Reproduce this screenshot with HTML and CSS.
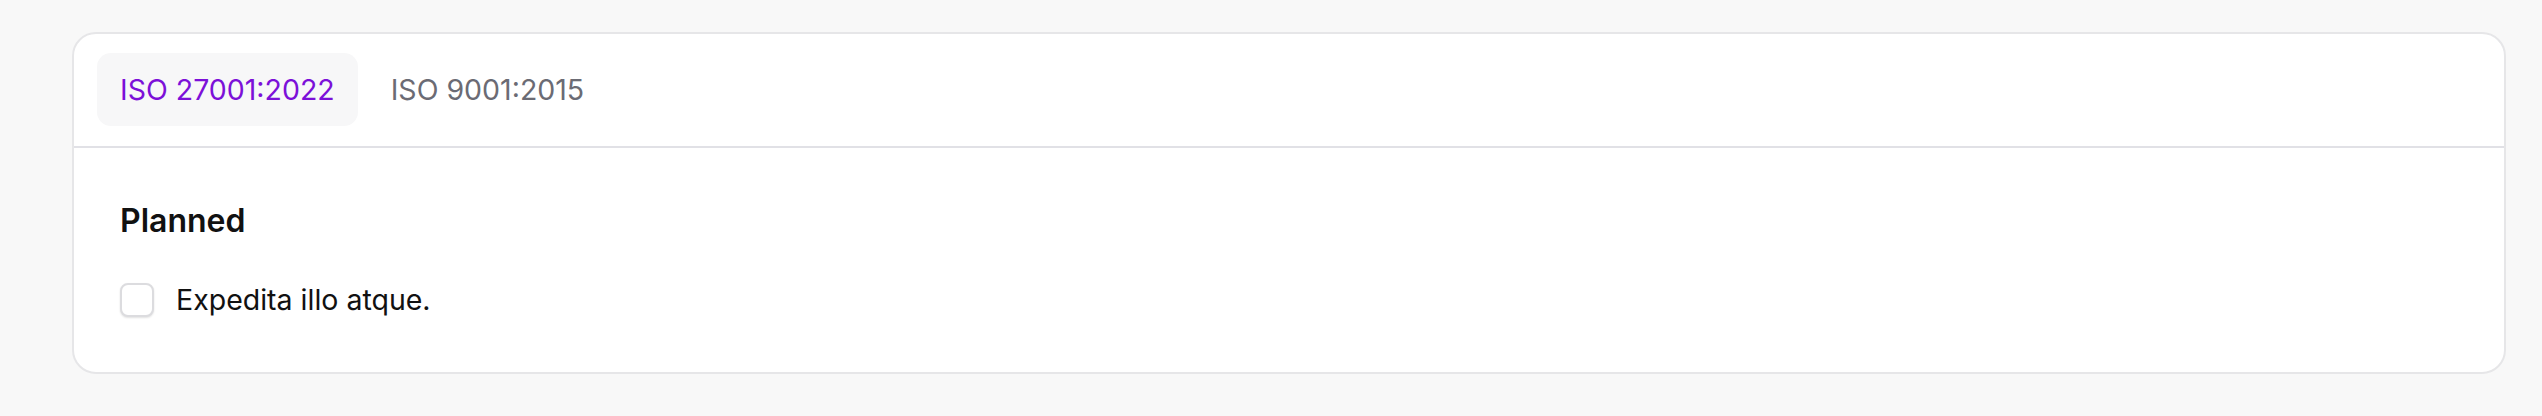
FILE: index.html
```html
<!DOCTYPE html>
<html>
<head>
<meta charset="utf-8">
<link rel="stylesheet" href="styles.css">
</head>
<body>
<div class="page">
  <div class="card">
    <div class="tabs">
      <div class="tab active">ISO 27001:2022</div>
      <div class="tab">ISO 9001:2015</div>
    </div>
    <div class="panel">
      <h2 class="heading">Planned</h2>
      <label class="item">
        <span class="checkbox"></span>
        <span class="item-text">Expedita illo atque.</span>
      </label>
    </div>
  </div>
</div>
</body>
</html>
```
FILE: styles.css
```css
html, body {
  margin: 0;
  padding: 0;
  background: #f8f8f8;
  font-family: Inter, "Noto Sans", sans-serif;
}
.page {
  padding: 32px 36px 0 72px;
}
.card {
  background: #ffffff;
  border: 2px solid #e6e6e8;
  border-radius: 24px;
  overflow: hidden;
}
.tabs {
  display: flex;
  gap: 10px;
  padding: 19px 23px 20px;
  border-bottom: 2px solid #e1e1e6;
}
.tab {
  height: 73px;
  display: flex;
  align-items: center;
  padding: 0 23px;
  border-radius: 14px;
  font-size: 28.5px;
  color: #6b6b74;
}
.tab.active {
  background: #f7f7f8;
  color: #7c10d8;
}
.panel {
  padding: 51px 46px 52px;
}
.heading {
  margin: 0 0 37px;
  font-size: 32px;
  font-weight: 600;
  line-height: 44px;
  color: #111111;
}
.item {
  display: flex;
  align-items: center;
  gap: 22px;
}
.checkbox {
  width: 30px;
  height: 30px;
  border: 2px solid #dcdcdf;
  border-radius: 8px;
  box-shadow: 0 1px 2px rgba(0,0,0,0.12);
  background: #fff;
}
.item-text {
  font-size: 28.5px;
  line-height: 40px;
  color: #111111;
}
```
